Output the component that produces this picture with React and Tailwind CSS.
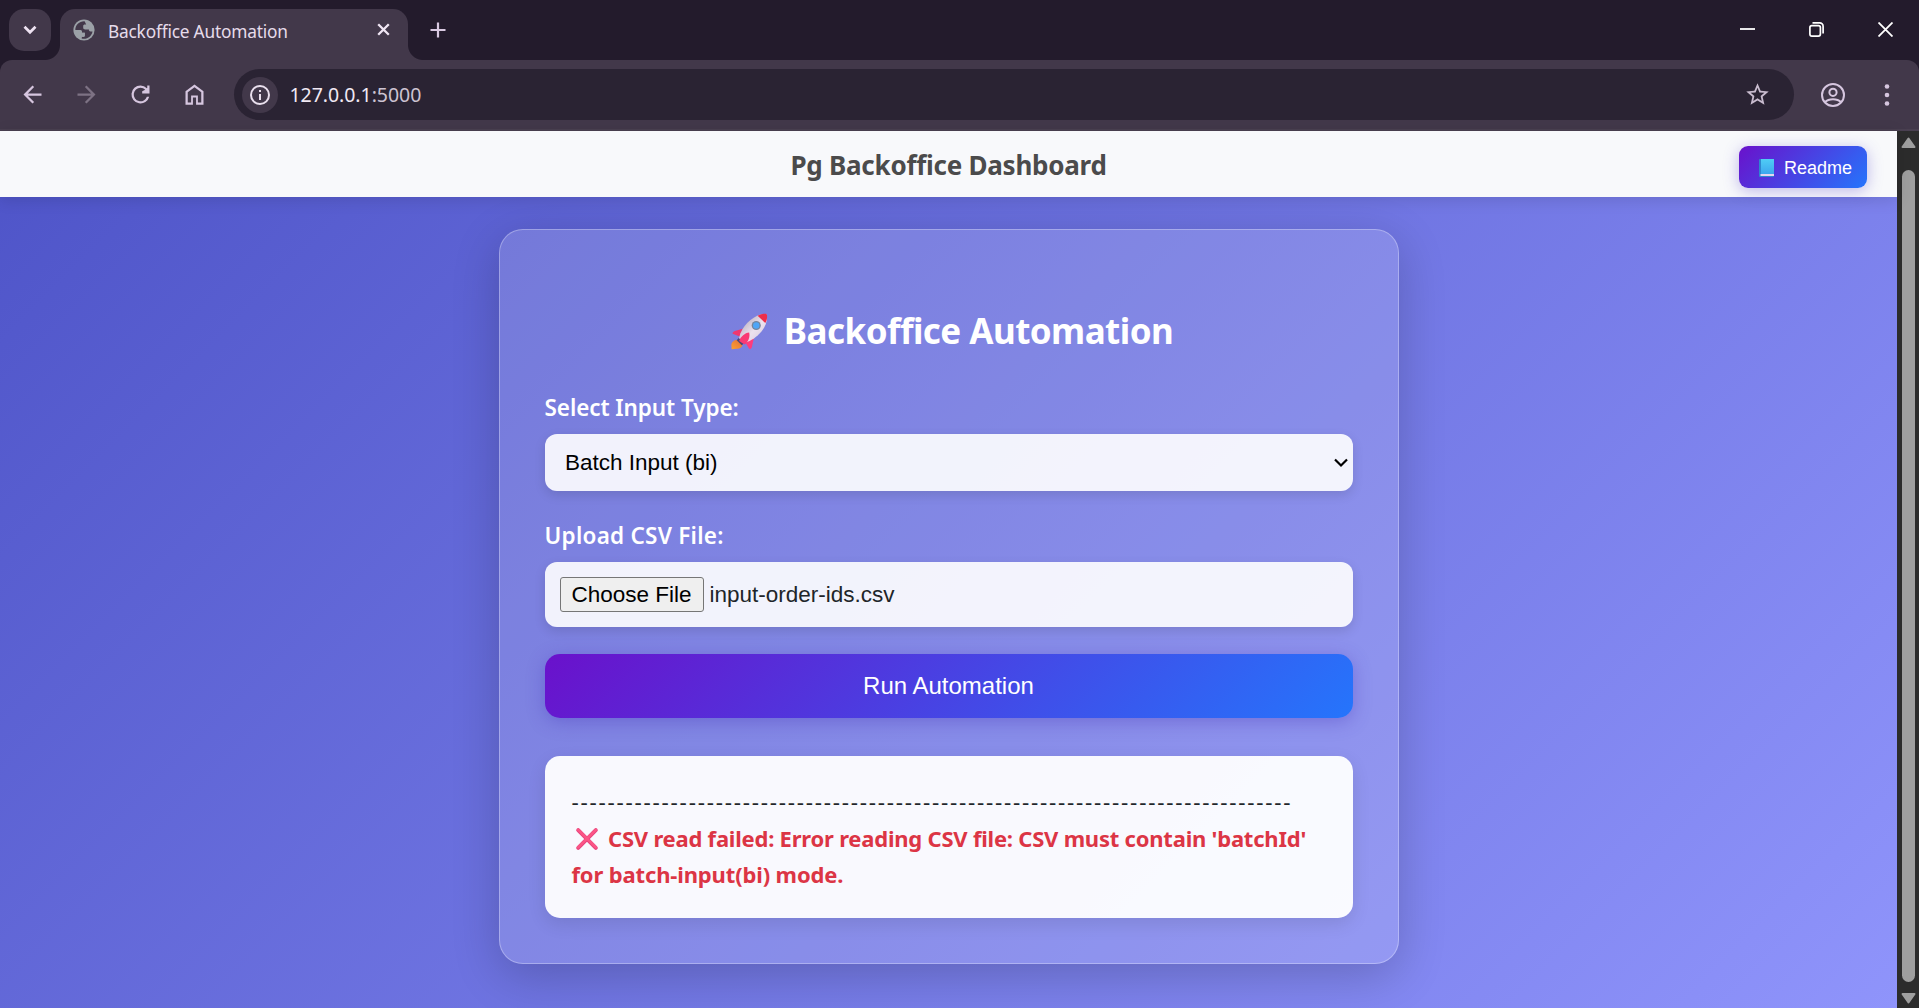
const Icon = ({ d, size = 27, className = "" }) => (
  <svg width={size} height={size} viewBox="0 0 24 24" fill="currentColor" className={className}>
    <path d={d} />
  </svg>
);

const BACK = "M20 11H7.83l5.59-5.59L12 4l-8 8 8 8 1.41-1.41L7.83 13H20v-2z";
const FORWARD = "M12 4l-1.41 1.41L16.17 11H4v2h12.17l-5.58 5.59L12 20l8-8z";
const REFRESH =
  "M17.65 6.35A7.96 7.96 0 0 0 12 4a8 8 0 1 0 7.73 10h-2.08A6 6 0 1 1 12 6c1.66 0 3.14.69 4.22 1.78L13.5 9.2v1.8H20V4h-2v2z";
const HOME = "M6 19h3v-6.2h6V19h3v-9l-6-4.5L6 10v9zm-2 2V9l8-6 8 6v12h-6.6v-6.4h-2.8V21H4z";
const INFO =
  "M11 7h2v2h-2zm0 4h2v6h-2zm1-9a10 10 0 1 0 0 20 10 10 0 0 0 0-20zm0 18a8 8 0 1 1 0-16 8 8 0 0 1 0 16z";
const STAR =
  "M22 9.24l-7.19-.62L12 2 9.19 8.63 2 9.24l5.46 4.73L5.82 21 12 17.27 18.18 21l-1.63-7.03L22 9.24zM12 15.4l-3.76 2.27 1-4.28-3.32-2.88 4.38-.38L12 6.1l1.71 4.04 4.38.38-3.32 2.88 1 4.28L12 15.4z";

function Globe() {
  return (
    <svg width="22" height="22" viewBox="0 0 22 22" className="shrink-0">
      <circle cx="11" cy="11" r="10.6" fill="#9ba1a7" />
      <path
        d="M11.6 2.2C6.4 2 2.3 6 2.3 10.9h4.6c1.3 0 2 .8 2 1.9v.9h2.9v2.8c0 .8-.6 1.3-1.3 1.3H8.6v1.7c5.6 1.4 10.2-2.4 10.9-7.1h-1.9c-1.4 0-1.7-1.1-1.7-1.9h-3.8c-1.1 0-1.9-.7-1.9-1.7V6.9c0-1 .8-1.5 1.7-1.5h1.3z"
        fill="#42384a"
      />
      <path
        d="M2.3 10.9h4.6c1.3 0 2 .8 2 1.9v.9h2.9v2.8c0 .8-.6 1.3-1.3 1.3H8.6v1.7C4.6 18.3 2.3 15 2.3 10.9z"
        fill="#9ba1a7"
      />
    </svg>
  );
}

function Rocket() {
  return (
    <svg width="37" height="37" viewBox="20 24 110 110" className="shrink-0">
      <defs>
        <linearGradient id="hull" x1="0" y1="0" x2="1" y2="1">
          <stop offset="0.2" stopColor="#bdb3c4" />
          <stop offset="0.55" stopColor="#ece2ee" />
          <stop offset="1" stopColor="#d3c4dc" />
        </linearGradient>
        <linearGradient id="flame" x1="1" y1="0" x2="0" y2="1">
          <stop offset="0" stopColor="#e0703c" />
          <stop offset="1" stopColor="#ffa02e" />
        </linearGradient>
      </defs>
      <path d="M38 104 L54 120 C52 128 44 131 36 130 L22 132 L21 119 C22 110 29 104 38 104Z" fill="url(#flame)" />
      <path d="M43 98 L59 114 L52 120 L37 105Z" fill="#4b4672" />
      <path d="M58 70 L34 77 C27 79 23 83 25 86 L46 94Z" fill="#f0386f" />
      <path d="M88 98 L82 126 C79 132 76 133 73 129 L62 110Z" fill="#ff3c7c" />
      <path d="M126 27 C98 24 62 50 48 84 L44 98 L60 113 L75 107 C108 90 132 60 126 27Z" fill="url(#hull)" />
      <path d="M99 32 C110 27 119 25 126 27 C129 35 127 45 122 54Z" fill="#ee2e4c" />
      <path d="M74 82 C61 83 49 94 44 107 L60 118 C72 109 77 96 74 82Z" fill="#f93a73" />
      <circle cx="95" cy="61" r="13.5" fill="#75859c" />
      <circle cx="95" cy="61" r="9.5" fill="#4fa6f7" />
    </svg>
  );
}

function Cross() {
  return (
    <svg width="24" height="24" viewBox="0 0 24 24" className="mr-[9.5px] ml-[3px] inline-block align-[-4px]">
      <path d="M3.2 3.2 20.8 20.8M20.8 3.2 3.2 20.8" stroke="#e8437d" strokeWidth="4" strokeLinecap="round" />
      <path d="M3.2 2.8 20.8 20.4M20.8 2.8 3.2 20.4" stroke="#fb5585" strokeWidth="2.6" strokeLinecap="round" />
    </svg>
  );
}

function Book() {
  return (
    <svg width="15" height="18" viewBox="0 0 15 18" className="shrink-0">
      <defs>
        <linearGradient id="cover" x1="0" y1="0" x2="0" y2="1">
          <stop offset="0" stopColor="#4fcdf5" />
          <stop offset="1" stopColor="#3da7ee" />
        </linearGradient>
      </defs>
      <rect x="0" y="0" width="15" height="18" rx="1" fill="#2f86cf" />
      <rect x="1.5" y="15" width="13.5" height="2" fill="#e3d5ee" />
      <rect x="2" y="0" width="13" height="15" fill="url(#cover)" />
    </svg>
  );
}

function TabStrip() {
  return (
    <div className="flex h-[60px] items-start bg-[#231b2c] pt-[9px]">
      <button className="ml-[9px] flex h-[42px] w-[42px] items-center justify-center rounded-[15px] bg-[#42384a]">
        <svg width="14" height="10" viewBox="0 0 14 10" fill="none" stroke="#eee3f2" strokeWidth="2.7">
          <path d="M1.5 1.8 7 7.3l5.5-5.5" />
        </svg>
      </button>
      <div className="relative ml-[9px] flex h-[51px] w-[348px] items-start rounded-t-[15px] bg-[#42384a] pl-[13px]">
        <span className="absolute bottom-0 -left-[15px] h-[15px] w-[15px] bg-[radial-gradient(circle_at_0_0,transparent_14.5px,#42384a_15.5px)]" />
        <span className="absolute -right-[15px] bottom-0 h-[15px] w-[15px] bg-[radial-gradient(circle_at_100%_0,transparent_14.5px,#42384a_15.5px)]" />
        <div className="pt-[10px]">
          <Globe />
        </div>
        <span className="ml-[13px] pt-[9px] font-['Noto_Sans'] text-[17.3px] leading-[27px] tracking-[-0.2px] whitespace-nowrap text-[#e6dcea]">
          Backoffice Automation
        </span>
        <svg
          width="13"
          height="13"
          viewBox="0 0 13 13"
          stroke="#f0e6f4"
          strokeWidth="2.3"
          className="mt-[14px] mr-[18px] ml-auto"
        >
          <path d="M1.2 1.2 11.8 11.8M11.8 1.2 1.2 11.8" />
        </svg>
      </div>
      <svg width="16" height="16" viewBox="0 0 16 16" stroke="#d9c9e2" strokeWidth="2.2" className="mt-[13px] ml-[22px]">
        <path d="M8 .5v15M.5 8h15" />
      </svg>
      <div className="mt-[13px] mr-[26px] ml-auto flex gap-[54px] text-white">
        <svg width="15" height="15" viewBox="0 0 15 15" stroke="currentColor" strokeWidth="1.8">
          <path d="M0 7h15" />
        </svg>
        <svg width="15" height="15" viewBox="0 0 15 15" fill="none" stroke="currentColor" strokeWidth="1.7">
          <rect x=".9" y="3.6" width="10.5" height="10.5" rx="2" />
          <path d="M3.5.9h7.2a3.4 3.4 0 0 1 3.4 3.4v7.2" />
        </svg>
        <svg width="15" height="15" viewBox="0 0 15 15" stroke="currentColor" strokeWidth="1.8">
          <path d="M.5.5l14 14M14.5.5l-14 14" />
        </svg>
      </div>
    </div>
  );
}

function Toolbar() {
  return (
    <div className="bg-[#231b2c]">
      <div className="flex h-[71px] items-start rounded-t-[12px] border-b-2 border-[#4a4051] bg-[#42384a] pt-[9px] text-[#d6c6df]">
        <div className="flex h-[51px] items-center pl-[19px]">
          <Icon d={BACK} />
          <Icon d={FORWARD} className="ml-[27px] text-[#7d7284]" />
          <Icon d={REFRESH} className="ml-[27px]" />
          <Icon d={HOME} className="ml-[27px]" />
        </div>
        <div className="ml-[26px] flex h-[51px] w-[1560px] items-center rounded-full bg-[#2a2333] pl-[8px]">
          <span className="flex h-[36px] w-[36px] items-center justify-center rounded-full bg-[#42384a] text-[#eae0ee]">
            <Icon d={INFO} size={24} />
          </span>
          <span className="ml-[11.5px] font-['Noto_Sans'] text-[19.5px] leading-[30px] tracking-[-0.05px] text-[#f1e9f4]">
            127.0.0.1<span className="text-[#cdc3d2]">:5000</span>
          </span>
          <Icon d={STAR} className="mr-[23px] ml-auto text-[#c9bccf]" />
        </div>
        <svg
          width="26"
          height="26"
          viewBox="0 0 26 26"
          fill="none"
          stroke="currentColor"
          strokeWidth="2"
          className="mt-[12.5px] ml-[26px]"
        >
          <circle cx="13" cy="13" r="11" />
          <circle cx="13" cy="10.3" r="3.6" />
          <path d="M5 20.2c2-2.1 5-3 8-3s6 .9 8 3" />
        </svg>
        <svg width="6" height="24" viewBox="0 0 6 24" fill="currentColor" className="mt-[13.5px] ml-[38px]">
          <circle cx="3" cy="3.5" r="2.3" />
          <circle cx="3" cy="12" r="2.3" />
          <circle cx="3" cy="20.5" r="2.3" />
        </svg>
      </div>
    </div>
  );
}

function PageHeader() {
  return (
    <header className="relative z-10 grid h-[66px] grid-cols-[1fr_auto_1fr] items-start bg-[#f8f9fb] shadow-[0_3px_15px_rgba(0,0,0,0.12)]">
      <h1 className="col-start-2 pt-[15px] font-['Noto_Sans'] text-[26px] leading-[38px] font-bold tracking-[-0.25px] whitespace-nowrap text-[#4b4b4b]">
        Pg Backoffice Dashboard
      </h1>
      <div className="flex justify-end pt-[15px] pr-[30px]">
        <button className="flex h-[42px] w-[128px] items-center rounded-[9px] bg-[linear-gradient(135deg,#6a11cb,#2575fc)] pt-[2px] pl-[20px] font-['Liberation_Sans'] text-[18px] text-white shadow-[0_3px_15px_rgba(80,60,200,0.35)]">
          <Book />
          <span className="ml-[10px]">Readme</span>
        </button>
      </div>
    </header>
  );
}

function Card() {
  return (
    <section className="mx-auto mt-[32px] h-[735px] w-[900px] rounded-[24px] border border-white/30 bg-white/15 px-[45px] pt-[77px] shadow-[0_12px_48px_rgba(0,0,0,0.2)]">
      <div className="flex h-[48px] items-center justify-center gap-[16px] pl-[7px]">
        <Rocket />
        <h2 className="font-['Noto_Sans'] text-[35px] leading-[48px] font-bold tracking-[-0.55px] whitespace-nowrap text-white">
          Backoffice Automation
        </h2>
      </div>
      <label className="mt-[38px] block font-['Noto_Sans'] text-[22.5px] leading-[30px] font-semibold tracking-[-0.08px] text-white">
        Select Input Type:
      </label>
      <div className="mt-[11px] flex h-[57px] items-center justify-between rounded-[12px] bg-white/90 pr-[5px] pl-[20.5px] font-['Liberation_Sans'] text-[22.5px] text-black shadow-[0_4px_12px_rgba(0,0,0,0.12)]">
        Batch Input (bi)
        <svg width="14" height="10" viewBox="0 0 14 10" fill="none" stroke="black" strokeWidth="2.2">
          <path d="M1 1.5l6 6 6-6" />
        </svg>
      </div>
      <label className="mt-[30px] block font-['Noto_Sans'] text-[22.5px] leading-[30px] font-semibold tracking-[0.25px] text-white">
        Upload CSV File:
      </label>
      <div className="mt-[11px] flex h-[65px] items-center rounded-[12px] bg-white/90 pl-[15px] font-['Liberation_Sans'] text-[22.5px] shadow-[0_4px_12px_rgba(0,0,0,0.12)]">
        <span className="flex h-[35px] w-[144px] items-center justify-center rounded-[3px] border border-[#767676] bg-[#efefef] whitespace-nowrap text-black">
          Choose File
        </span>
        <span className="ml-[6px] text-[#212529]">input-order-ids.csv</span>
      </div>
      <button className="mt-[27px] flex h-[64px] w-full items-center justify-center rounded-[15px] bg-[linear-gradient(135deg,#6a11cb,#2575fc)] font-['Liberation_Sans'] text-[24px] text-white shadow-[0_4px_18px_rgba(70,50,180,0.35)]">
        Run Automation
      </button>
      <div className="mt-[38px] h-[162px] rounded-[15px] bg-white/95 pt-[27.5px] pl-[27px] font-['Noto_Sans'] text-[22px] leading-[36px] whitespace-nowrap shadow-[0_6px_18px_rgba(0,0,0,0.1)]">
        <div className="text-[22.5px] tracking-[1.765px] text-[#212529]">{"-".repeat(80)}</div>
        <div className="font-bold text-[#dc3545]">
          <div className="h-[36px] tracking-[-0.22px]">
            <Cross />
            CSV read failed: Error reading CSV file: CSV must contain 'batchId'
          </div>
          <div className="h-[36px] tracking-[-0.14px]">for batch-input(bi) mode.</div>
        </div>
      </div>
    </section>
  );
}

function Scrollbar() {
  return (
    <div className="flex w-[22px] flex-col items-center bg-[#2c2c2c] pt-[6px] pb-[4px]">
      <svg width="15" height="12" viewBox="0 0 15 12" className="shrink-0">
        <path d="M7.5 1.5 13.5 10h-12z" fill="#9f9f9f" stroke="#9f9f9f" strokeWidth="2" strokeLinejoin="round" />
      </svg>
      <div className="mt-[21px] w-[13px] flex-1 rounded-full bg-[#9f9f9f]" />
      <svg width="15" height="12" viewBox="0 0 15 12" className="mt-[10px] shrink-0">
        <path d="M7.5 10.5 1.5 2h12z" fill="#9f9f9f" stroke="#9f9f9f" strokeWidth="2" strokeLinejoin="round" />
      </svg>
    </div>
  );
}

export default function App() {
  return (
    <div className="flex h-[1008px] w-[1919px] flex-col overflow-hidden">
      <TabStrip />
      <Toolbar />
      <div className="flex h-[877px]">
        <main className="w-[1897px] bg-[linear-gradient(135deg,#4e54c8,#8f94fb)]">
          <PageHeader />
          <Card />
        </main>
        <Scrollbar />
      </div>
    </div>
  );
}
